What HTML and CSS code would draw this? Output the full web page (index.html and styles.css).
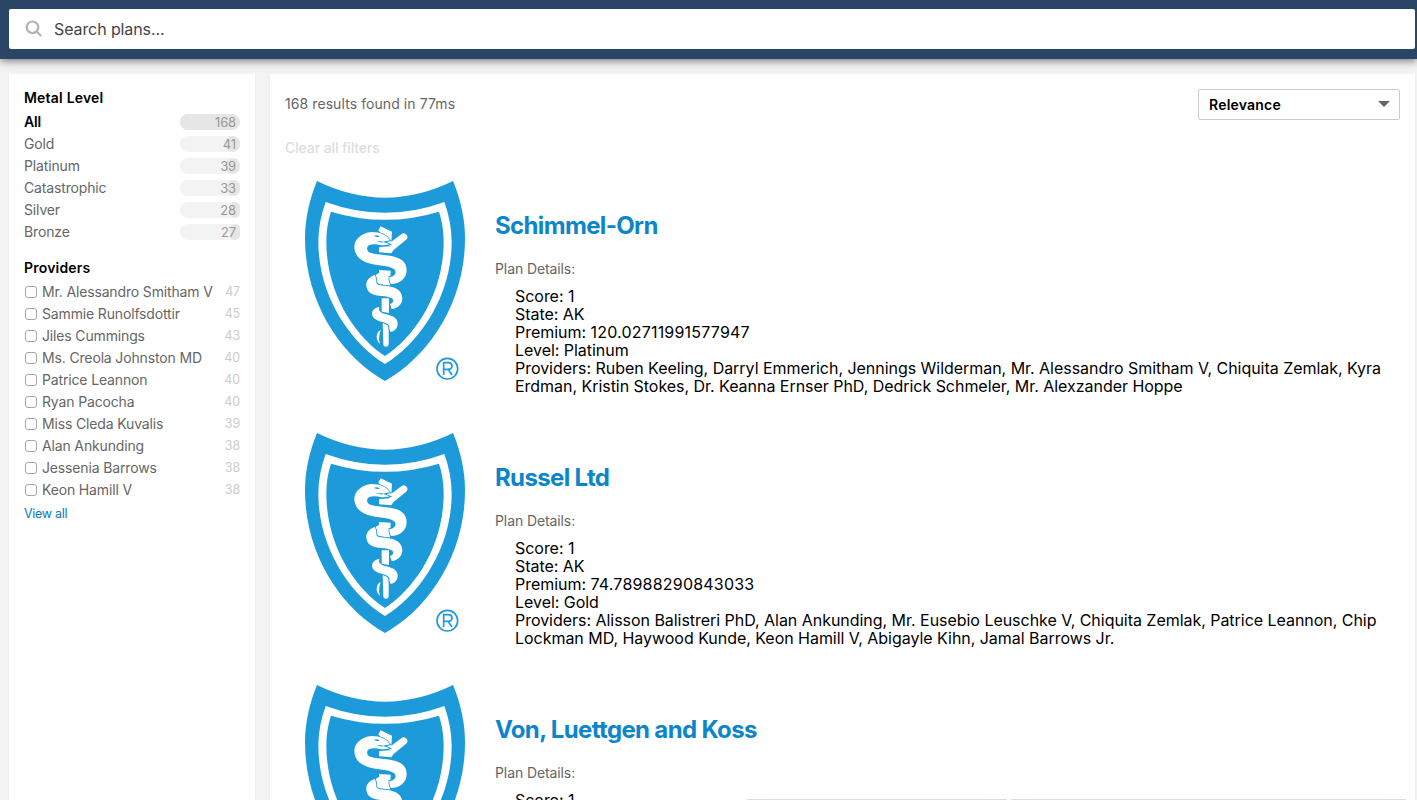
FILE: index.html
```
<!DOCTYPE html>
<html lang="en">
<head>
<meta charset="utf-8">
<title>Plans</title>
<link rel="stylesheet" href="styles.css">
</head>
<body>
<svg class="defs" width="0" height="0">
  <symbol id="shield" viewBox="30 33 480 600">
    <path fill="#1c9ad9" d="M66 33Q270 133 474 33C498 90 510 150 510 205C510 400 400 560 270 633C140 560 30 400 30 205C30 150 42 90 66 33Z"/>
    <path fill="#fff" d="M92 96Q270 161 448 96C462 135 470 175 470 215C470 380 372 520 270 582C168 520 70 380 70 215C70 175 78 135 92 96Z"/>
    <path fill="#1c9ad9" d="M108 125Q270 174 432 125C442 155 446 185 446 215C446 370 360 500 270 558C180 500 94 370 94 215C94 185 98 155 108 125Z"/>
    <g transform="translate(135 135)" fill="#fff">
      <path d="M115 46L122 34L156 50L154 80L186 56Q192 53 198 58Q206 66 200 73L160 106L154 115L117 112L118 96L150 94Z"/>
      <path d="M117 165L152 167L150 212L112 208L106 180L117 174Z"/>
      <path d="M125 250L147 250L147 294L125 290Z"/>
      <path d="M128 322L146 326V388Q146 395 138 395Q130 395 130 388Z"/>
      <g stroke="#1c9ad9" stroke-width="5" paint-order="stroke">
        <path d="M150 76C140 60 122 51 95 51C62 54 42 75 43 98C45 125 65 140 95 147C125 153 155 153 165 165C170 176 162 185 148 186C148 194 149 202 153 207C180 207 200 190 200 165C200 140 180 126 150 122C125 119 100 118 88 112C78 105 80 94 88 90C98 86 112 88 124 91C132 91 142 90 149 88L128 80C136 79 143 78 150 76Z"/>
        <path d="M104 180C88 185 77 198 79 212C81 235 100 240 125 243C145 245 158 248 160 256C160 262 156 266 150 267L155 282C175 280 188 265 187 248C185 225 165 215 140 213C120 211 108 210 109 200C109 192 108 186 104 180Z"/>
        <path d="M118 275C105 278 96 285 96 297C97 312 115 318 130 322C145 326 150 332 148 342L152 351C165 349 174 338 173 325C171 305 155 302 135 297C120 292 115 287 118 275Z"/>
      </g>
      <path d="M122 345C108 350 105 376 120 386C115 370 118 360 122 345Z"/>
      <path fill="#1c9ad9" d="M102 62Q112 59 119 65Q110 68 102 62ZM104 79Q118 76 130 80L126 83Q116 79 104 79Z"/>
    </g>
    <circle cx="457" cy="596" r="31" fill="none" stroke="#1c9ad9" stroke-width="5"/>
    <path fill="none" stroke="#1c9ad9" stroke-width="5" d="M446 615V578H459C475 578 475 598 459 598H446M459 598L471 615"/>
  </symbol>
</svg>

<header class="topbar">
  <div class="search">
    <svg class="search-icon" width="18" height="18" viewBox="0 0 18 18"><circle cx="7.5" cy="7.3" r="5.8"/><path d="M11.6 11.5L16.2 16"/></svg>
    <span>Search plans...</span>
  </div>
</header>

<div class="layout">
  <aside class="sidebar">
    <section class="facet">
      <h2>Metal Level</h2>
      <div class="level active"><span>All</span><span class="pill"><i style="width:100%"></i><b>168</b></span></div>
      <div class="level"><span>Gold</span><span class="pill"><i style="width:24.4%"></i><b>41</b></span></div>
      <div class="level"><span>Platinum</span><span class="pill"><i style="width:23.2%"></i><b>39</b></span></div>
      <div class="level"><span>Catastrophic</span><span class="pill"><i style="width:19.6%"></i><b>33</b></span></div>
      <div class="level"><span>Silver</span><span class="pill"><i style="width:16.7%"></i><b>28</b></span></div>
      <div class="level"><span>Bronze</span><span class="pill"><i style="width:16.1%"></i><b>27</b></span></div>
    </section>
    <section class="facet">
      <h2>Providers</h2>
      <div class="provider"><span class="box"></span><span class="name">Mr. Alessandro Smitham V</span><span class="count">47</span></div>
      <div class="provider"><span class="box"></span><span class="name">Sammie Runolfsdottir</span><span class="count">45</span></div>
      <div class="provider"><span class="box"></span><span class="name">Jiles Cummings</span><span class="count">43</span></div>
      <div class="provider"><span class="box"></span><span class="name">Ms. Creola Johnston MD</span><span class="count">40</span></div>
      <div class="provider"><span class="box"></span><span class="name">Patrice Leannon</span><span class="count">40</span></div>
      <div class="provider"><span class="box"></span><span class="name">Ryan Pacocha</span><span class="count">40</span></div>
      <div class="provider"><span class="box"></span><span class="name">Miss Cleda Kuvalis</span><span class="count">39</span></div>
      <div class="provider"><span class="box"></span><span class="name">Alan Ankunding</span><span class="count">38</span></div>
      <div class="provider"><span class="box"></span><span class="name">Jessenia Barrows</span><span class="count">38</span></div>
      <div class="provider"><span class="box"></span><span class="name">Keon Hamill V</span><span class="count">38</span></div>
      <a class="view-all">View all</a>
    </section>
  </aside>

  <main class="results">
    <div class="actions">
      <span class="stats">168 results found in 77ms</span>
      <div class="select"><span>Relevance</span><span class="caret"></span></div>
    </div>
    <div class="clear">Clear all filters</div>

    <article class="plan">
      <svg class="logo"><use href="#shield"/></svg>
      <div class="info">
        <h3>Schimmel-Orn</h3>
        <p class="label">Plan Details:</p>
        <div class="details">Score: 1<br>State: AK<br>Premium: <span class="num">120.02711991577947</span><br>Level: Platinum<br>Providers: Ruben Keeling, Darryl Emmerich, Jennings Wilderman, Mr. Alessandro Smitham V, Chiquita Zemlak, Kyra<br>Erdman, Kristin Stokes, Dr. Keanna Ernser PhD, Dedrick Schmeler, Mr. Alexzander Hoppe</div>
      </div>
    </article>
    <article class="plan">
      <svg class="logo"><use href="#shield"/></svg>
      <div class="info">
        <h3>Russel Ltd</h3>
        <p class="label">Plan Details:</p>
        <div class="details">Score: 1<br>State: AK<br>Premium: <span class="num">74.78988290843033</span><br>Level: Gold<br>Providers: Alisson Balistreri PhD, Alan Ankunding, Mr. Eusebio Leuschke V, Chiquita Zemlak, Patrice Leannon, Chip<br>Lockman MD, Haywood Kunde, Keon Hamill V, Abigayle Kihn, Jamal Barrows Jr.</div>
      </div>
    </article>
    <article class="plan">
      <svg class="logo"><use href="#shield"/></svg>
      <div class="info">
        <h3>Von, Luettgen and Koss</h3>
        <p class="label">Plan Details:</p>
        <div class="details">Score: 1</div>
      </div>
    </article>
  </main>
</div>
<div class="edge edge-left"></div>
<div class="edge edge-right"></div>
</body>
</html>
```
FILE: styles.css
```
* { box-sizing: border-box; }
body {
  margin: 0;
  height: 800px;
  overflow: hidden;
  position: relative;
  background: #f3f3f3;
  color: #000;
  font-family: Inter, Roboto, sans-serif;
}
.defs { display: block; height: 0; }
h2, h3, p { margin: 0; }

.topbar {
  height: 59px;
  padding: 9px 2px 10px 9px;
  background: #2a4565;
  box-shadow: 0 2px 8px rgba(0, 0, 0, .5);
}
.search {
  height: 40px;
  display: flex;
  align-items: center;
  gap: 11px;
  padding-left: 16px;
  background: #fff;
  border-radius: 2px;
  color: #444;
  font-size: 16px;
  letter-spacing: -.1px;
}
.search-icon { fill: none; stroke: #b3b3b3; stroke-width: 2.2; }

.layout {
  display: flex;
  gap: 15px;
  height: 726px;
  margin: 15px 2px 0 9px;
}
.sidebar, .results { background: #fff; box-shadow: 0 1px 2px rgba(0, 0, 0, .06); }
.sidebar {
  width: 246px;
  flex: none;
  padding: 13px 15px;
  font-size: 14px;
  color: #666;
}
.facet { margin-bottom: 14px; }
.facet h2 {
  height: 24px;
  line-height: 22px;
  font-size: 14px;
  font-weight: 600;
  letter-spacing: .2px;
  color: #000;
}
.level, .provider {
  display: flex;
  align-items: center;
  height: 22px;
  line-height: 22px;
  letter-spacing: -.15px;
  white-space: nowrap;
}
.level { justify-content: space-between; }
.level.active { color: #000; font-weight: 600; }
.pill {
  position: relative;
  width: 60px;
  height: 16px;
  line-height: 16px;
  border-radius: 8px;
  background: #f3f3f3;
  text-align: right;
}
.pill i {
  position: absolute;
  top: 0;
  right: 0;
  height: 16px;
  border-radius: 8px;
  background: #e6e6e6;
}
.pill b {
  position: relative;
  padding-right: 4px;
  color: #999;
  font-size: 13px;
  font-weight: 400;
  letter-spacing: -.15px;
}
.box {
  width: 12px;
  height: 12px;
  margin: 0 5px 0 1px;
  border: 1px solid #a6a6a6;
  border-radius: 3px;
}
.name { flex: 1; }
.count { color: #ccc; font-size: 12.5px; }
.view-all {
  display: block;
  padding-top: 1px;
  line-height: 24px;
  font-size: 12.5px;
  letter-spacing: -.3px;
  color: #0878b8;
}

.results { flex: 1; padding: 15px 15px 0; min-width: 0; }
.actions { display: flex; justify-content: space-between; height: 48px; }
.stats { font-size: 14px; line-height: 30px; letter-spacing: .08px; color: #666; }
.select {
  display: flex;
  align-items: center;
  justify-content: space-between;
  width: 202px;
  height: 31px;
  padding: 0 9px 0 10px;
  border: 1px solid #ccc;
  border-radius: 2px;
  font-size: 14px;
  font-weight: 600;
  letter-spacing: .2px;
}
.caret {
  border: 6px solid transparent;
  border-top-color: #666;
  border-bottom: 0;
  margin-bottom: 2px;
}
.clear { height: 44px; line-height: 22px; font-size: 14px; color: #ddd; font-weight: 500; letter-spacing: -.1px; }

.plan { display: flex; height: 252px; padding-left: 20px; }
.logo { width: 160px; height: 200px; flex: none; margin-right: 30px; }
.info { padding-top: 30px; white-space: nowrap; }
.info h3 {
  line-height: 30px;
  font-size: 24px;
  font-weight: 700;
  letter-spacing: -.65px;
  color: #0c85ca;
}
.label { margin-top: 18px; line-height: 20px; font-size: 14px; color: #666; letter-spacing: -.1px; }
.details { padding: 8px 0 0 20px; font-size: 16px; line-height: 18px; letter-spacing: -.035px; }
.num { letter-spacing: .2px; }

/* Panel edges rising over the bottom of the page */
.edge {
  position: absolute;
  top: 799px;
  height: 1px;
  background: #ddd;
  box-shadow: 0 0 26px rgba(0, 0, 0, .12);
}
.edge-left { left: 747px; width: 260px; }
.edge-right { left: 1011px; width: 395px; }
```
